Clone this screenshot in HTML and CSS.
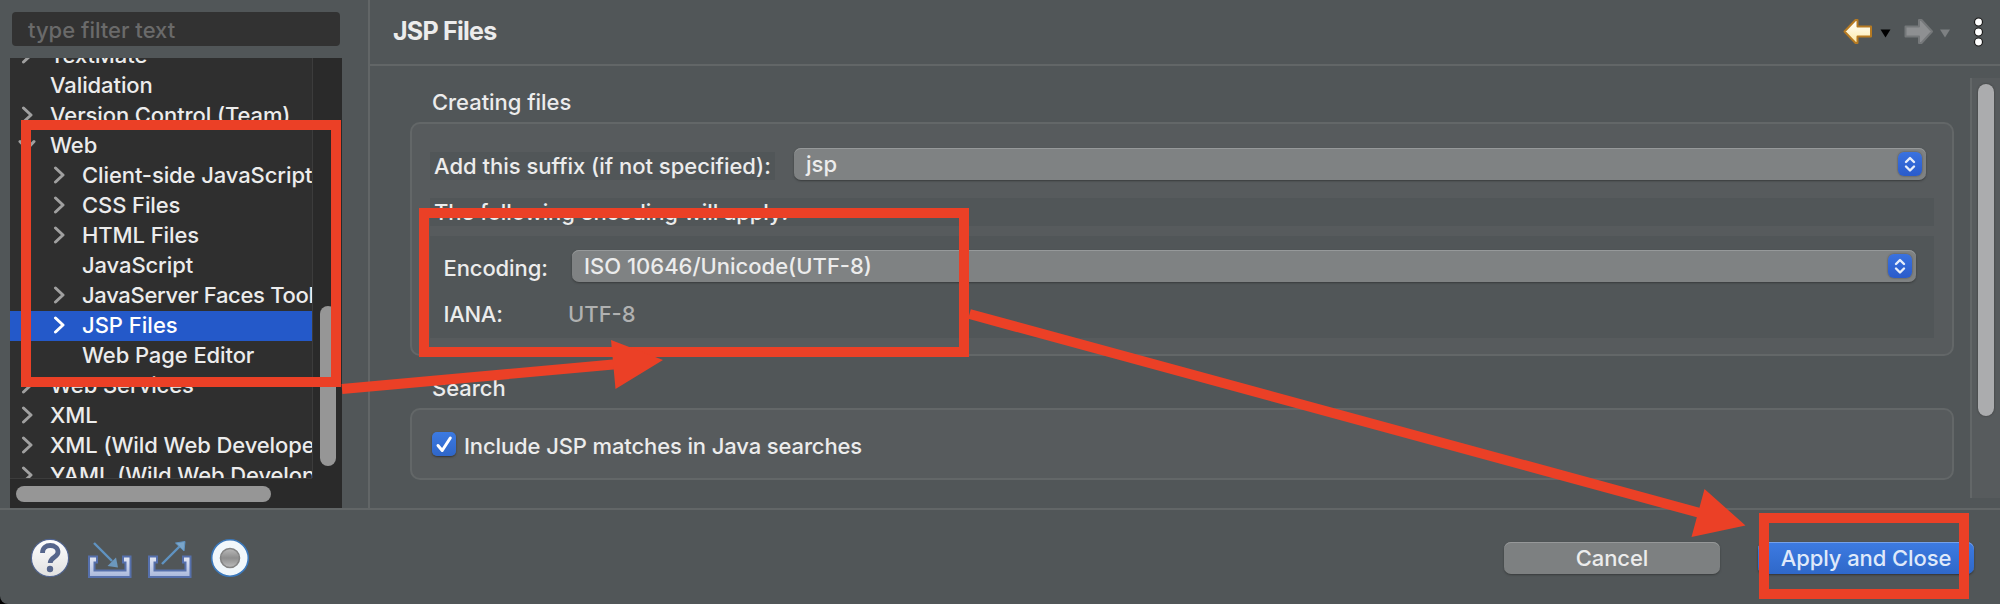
FILE: index.html
```html
<!DOCTYPE html>
<html lang="en">
<head>
<meta charset="utf-8">
<title>Preferences</title>
<link rel="stylesheet" href="styles.css">
</head>
<body>
<svg class="defs" width="0" height="0" aria-hidden="true">
  <symbol id="chev" viewBox="0 0 12 18"><path d="M2.500 2l7.500 7-7.500 7" fill="none" stroke="currentColor" stroke-width="3" stroke-linecap="round" stroke-linejoin="round"/></symbol>
  <symbol id="updown" viewBox="0 0 24 24"><path d="M8 10l4-4 4 4M8 14.500l4 4 4-4" fill="none" stroke="#e8eefb" stroke-width="2.400" stroke-linecap="round" stroke-linejoin="round"/></symbol>
  <linearGradient id="tray" x1="0" y1="0" x2="0" y2="1"><stop offset="0" stop-color="#e4e8f4"/><stop offset="1" stop-color="#a9b8dc"/></linearGradient>
  <linearGradient id="gold" x1="0" y1="0" x2="0" y2="1"><stop offset="0" stop-color="#fff"/><stop offset="1" stop-color="#fdeaa8"/></linearGradient>
  <linearGradient id="ball" x1="0" y1="0" x2="0" y2="1"><stop offset="0" stop-color="#fff"/><stop offset="1" stop-color="#e0e0e0"/></linearGradient>
  <linearGradient id="knob" x1="0" y1="0" x2="0" y2="1"><stop offset="0" stop-color="#b9b9b9"/><stop offset=".5" stop-color="#8e8e8e"/><stop offset="1" stop-color="#bcbcbc"/></linearGradient>
</svg>
<div class="window">
  <div class="upper">
    <aside class="sidebar">
      <div class="filter"><span>type filter text</span></div>
      <div class="tree">
        <div class="viewport">
          <ul class="rows">
            <li class="row"><svg class="chev"><use href="#chev"/></svg><span>TextMate</span></li>
            <li class="row leaf"><span>Validation</span></li>
            <li class="row"><svg class="chev"><use href="#chev"/></svg><span>Version Control (Team)</span></li>
            <li class="row open"><svg class="chev"><use href="#chev"/></svg><span>Web</span></li>
            <li class="row child"><svg class="chev"><use href="#chev"/></svg><span>Client-side JavaScript</span></li>
            <li class="row child"><svg class="chev"><use href="#chev"/></svg><span>CSS Files</span></li>
            <li class="row child"><svg class="chev"><use href="#chev"/></svg><span>HTML Files</span></li>
            <li class="row child leaf"><span>JavaScript</span></li>
            <li class="row child"><svg class="chev"><use href="#chev"/></svg><span class="tight">JavaServer Faces Tools</span></li>
            <li class="row child selected"><svg class="chev"><use href="#chev"/></svg><span>JSP Files</span></li>
            <li class="row child leaf"><span>Web Page Editor</span></li>
            <li class="row"><svg class="chev"><use href="#chev"/></svg><span>Web Services</span></li>
            <li class="row"><svg class="chev"><use href="#chev"/></svg><span>XML</span></li>
            <li class="row"><svg class="chev"><use href="#chev"/></svg><span>XML (Wild Web Developer)</span></li>
            <li class="row"><svg class="chev"><use href="#chev"/></svg><span>YAML (Wild Web Developer)</span></li>
          </ul>
        </div>
        <div class="vbar"><div class="vthumb"></div></div>
        <div class="hbar"><div class="hthumb"></div></div>
      </div>
    </aside>
    <main class="main">
      <header class="header">
        <h1 class="title">JSP Files</h1>
        <svg class="nav" viewBox="0 0 145 30" width="145" height="30">
          <path d="M1.500 14.500L12.500 3h2v6.500H28v10H14.500V26h-2z" fill="url(#gold)" stroke="#b67a22" stroke-width="2" stroke-linejoin="round"/>
          <path d="M37.500 12.500h10l-5 8z" fill="#000"/>
          <path d="M89 14.500L78.500 3H76v6.500H62.500v10H76V26h2.500z" fill="#8e9092" stroke="#75787a" stroke-width="2" stroke-linejoin="round"/>
          <path d="M97 12.500h10l-5 8z" fill="#7d8082"/>
          <g fill="#fff" stroke="#1b1b1b" stroke-width="1.200"><circle cx="135.500" cy="5" r="4"/><circle cx="135.500" cy="15" r="4"/><circle cx="135.500" cy="25" r="4"/></g>
        </svg>
      </header>
      <div class="body">
        <div class="form">
          <h2 class="caption cap1">Creating files</h2>
          <section class="group creating">
            <div class="line">
              <label class="plate suffix">Add this suffix (if not specified):</label>
              <div class="combo"><span>jsp</span><svg class="knob"><use href="#updown"/></svg></div>
            </div>
            <p class="plate note">The following encoding will apply:</p>
            <div class="plate enc">
              <label class="enc-label">Encoding:</label>
              <div class="combo"><span class="iso">ISO 10646/Unicode(UTF-8)</span><svg class="knob"><use href="#updown"/></svg></div>
              <span class="iana">IANA:</span><span class="value">UTF-8</span>
            </div>
          </section>
          <h2 class="caption cap2">Search</h2>
          <section class="group search">
            <svg class="check" viewBox="0 0 24 24"><path d="M6 13.500l4.200 5L18.300 6" fill="none" stroke="#fff" stroke-width="3" stroke-linecap="round" stroke-linejoin="round"/></svg>
            <span>Include JSP matches in Java searches</span>
          </section>
        </div>
        <div class="scroll"><div class="thumb"></div></div>
      </div>
    </main>
  </div>
  <footer class="footer">
    <svg class="tools" width="220" height="44" viewBox="0 0 220 44">
      <circle cx="20" cy="22" r="18.600" fill="url(#ball)" stroke="#51648f" stroke-width="1.200"/>
      <path d="M12.500 17c0-5 3.500-7.500 7.800-7.500s7.700 2.500 7.700 6.500c0 5.500-7.800 5-7.800 11" fill="none" stroke="#56668c" stroke-width="4.800"/>
      <circle cx="20" cy="33" r="3.200" fill="#56668c"/>
      <path d="M59 20.500h8v6h-2.500v8h31v-8H93v-6h7.500v20.500H59z" fill="url(#tray)" stroke="#5670ac" stroke-width="2"/>
      <path d="M64 7l18 18" stroke="#5f93c2" stroke-width="2.400"/><path d="M88 31.500l-10.500-1.500 8.500-8.500z" fill="#6b97bd"/>
      <path d="M119 20.500h8v6h-2.500v8h31v-8H153v-6h7.500v20.500H119z" fill="url(#tray)" stroke="#5670ac" stroke-width="2"/>
      <path d="M132 28l18-18" stroke="#5f93c2" stroke-width="2.400"/><path d="M155 5.500l-9.500 1.500 8.500 8z" fill="#7aa5c9" stroke="#5f93c2"/>
      <circle cx="200" cy="22" r="18.300" fill="#f1f7fb" stroke="#3b78bb" stroke-width="1.600"/>
      <circle cx="200" cy="22" r="9.500" fill="url(#knob)" stroke="#848484" stroke-width="1.600"/>
    </svg>
    <div class="buttons">
      <button class="btn">Cancel</button>
      <button class="btn primary">Apply and Close</button>
    </div>
  </footer>
  <svg class="marks" viewBox="0 0 2000 604" width="2000" height="604">
    <g fill="none" stroke="#eb4026" stroke-width="10">
      <rect x="26" y="125" width="310" height="257"/>
      <rect x="424" y="213" width="540" height="139"/>
      <rect x="1764" y="518" width="200" height="76"/>
      <path d="M342 389L616 364.300M969.500 314L1700 513"/>
    </g>
    <path d="M611 340L663 360 615.500 389zM1704.500 489L1745.500 525.500 1691.500 537z" fill="#eb4026"/>
  </svg>
</div>
</body>
</html>
```
FILE: styles.css
```css
* { box-sizing: border-box; margin: 0; padding: 0; }
body { background: #000; font: 450 22px/30px Inter, "Liberation Sans", sans-serif; color: #ececec; overflow: hidden; }
.defs { position: absolute; }
.window { width: 2000px; height: 604px; background: #515658; border-bottom-left-radius: 8px; display: flex; flex-direction: column; position: relative; overflow: hidden; }
.upper { display: flex; height: 508px; }
.sidebar { width: 370px; border-right: 2px solid #626667; padding: 12px 0 0 10px; }
.filter { margin-left: 2px; width: 328px; height: 34px; border-radius: 4px; background: #323232; color: #6a6a6a; padding: 3px 0 0 16px; }
.tree { margin-top: 12px; width: 332px; height: 450px; background: #2a2a2a; display: grid; grid-template: 420px 30px / 302px 30px; }
.viewport { background: #2f2f2f; overflow: hidden; }
.rows { list-style: none; margin-top: -17px; width: 302px; letter-spacing: -0.1px; }
.row { height: 30px; display: flex; align-items: center; gap: 17px; padding: 0 0 2px 11px; white-space: nowrap; overflow: hidden; }
.row.leaf { padding-left: 40px; }
.row.child { padding-left: 43px; }
.row.child.leaf { padding-left: 72px; }
.tight { letter-spacing: -0.32px; }
.chev { width: 12px; height: 18px; color: #a0a0a0; flex: none; }
.open .chev { transform: rotate(90deg); }
.selected { background: #2459c9; color: #fff; }
.selected .chev { color: #fff; }
.selected span { letter-spacing: 0; }
.vbar { border-left: 1px solid #3c3c3c; padding: 248px 0 0 7px; }
.vthumb { width: 16px; height: 160px; border-radius: 8px; background: #969696; }
.hbar { border-top: 1px solid #3c3c3c; padding: 7px 0 0 6px; }
.hthumb { width: 255px; height: 16px; border-radius: 8px; background: #969696; }
.main { width: 1630px; }
.header { height: 66px; border-bottom: 2px solid #626667; display: flex; justify-content: space-between; padding: 16px 12px 0 23px; }
.title { font-size: 25px; font-weight: 700; line-height: 30px; letter-spacing: -0.75px; }
.nav { flex: none; margin-top: 1px; }
.body { display: flex; justify-content: space-between; height: 442px; }
.form { padding-left: 40px; }
.caption { font-size: 22px; font-weight: 450; line-height: 30px; padding-left: 22px; letter-spacing: -0.05px; }
.cap1 { margin-top: 21px; }
.cap2 { margin-top: 17px; }
.group { width: 1544px; border: 2px solid #636768; border-radius: 10px; background: #575b5d; }
.creating { height: 234px; margin-top: 5px; padding: 24px 18px 0; }
.search { height: 72px; margin-top: 5px; padding: 0 0 0 20px; display: flex; align-items: center; gap: 8px; letter-spacing: -0.12px; }
.line { display: flex; justify-content: space-between; padding-right: 8px; }
.plate { background: #515658; }
.suffix { width: 345px; height: 28px; margin-top: 4px; padding-left: 4px; line-height: 28px; white-space: nowrap; }
.combo { height: 32px; border-radius: 7px; background: #7f8283; box-shadow: inset 0 1px #96999a, 0 1px 2px #383b3c; display: flex; justify-content: space-between; align-items: center; padding: 0 4px 0 12px; }
.line .combo { width: 1132px; }
.iso { letter-spacing: 0; }
.knob { width: 24px; height: 24px; border-radius: 6px; background: linear-gradient(#3a72e0, #2a5bcb); box-shadow: 0 0 2px #444; }
.note { height: 28px; margin-top: 18px; padding-left: 4px; line-height: 28px; letter-spacing: -0.1px; }
.enc { height: 102px; margin-top: 10px; padding: 14px 18px 0 13.5px; display: grid; grid-template: 32px 30px / 128.5px 1344px; row-gap: 17px; }
.enc-label { padding-top: 3px; letter-spacing: -0.1px; }
.iana { letter-spacing: -0.3px; }
.value { color: #b0b1b1; margin-left: -4px; }
.check { width: 24px; height: 24px; border-radius: 5px; background: linear-gradient(#3c7ae2, #2f66c8); box-shadow: 0 1px 2px #333; }
.search span { padding-top: 3px; }
.scroll { width: 30px; height: 420px; margin-top: 12px; border-left: 2px solid #636768; background: #575b5d; padding: 6px 0 0 6px; }
.thumb { width: 16px; height: 332px; border-radius: 8px; background: #abacae; box-shadow: 0 0 2px #333; }
.footer { height: 96px; border-top: 2px solid #626667; display: flex; justify-content: space-between; padding: 26px 26px 0 30px; }
.buttons { display: flex; gap: 38px; padding-top: 6px; }
.btn { width: 216px; height: 32px; border: 0; border-radius: 7px; background: #7d8081; color: #ececec; font: inherit; letter-spacing: -0.1px; box-shadow: inset 0 1px #969899, 0 1px 2px #383b3c; }
.primary { background: linear-gradient(#3d7be2, #2f68c9); box-shadow: inset 0 1px #75a1ea, 0 1px 2px #333; color: #dfe9fa; }
.marks { position: absolute; left: 0; top: 0; }
```
